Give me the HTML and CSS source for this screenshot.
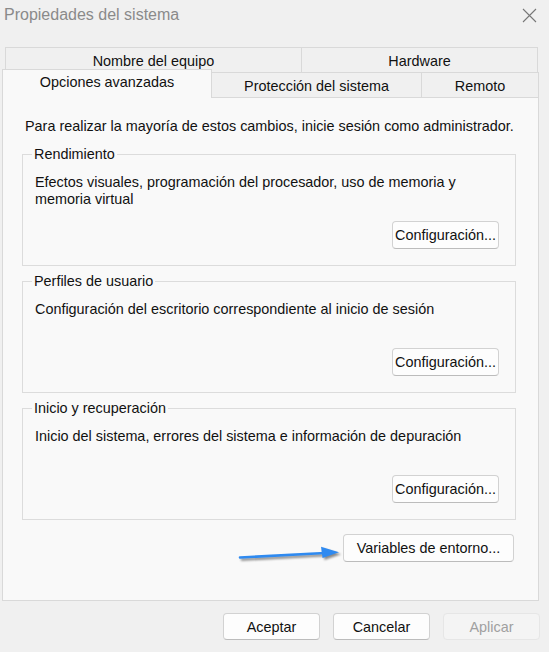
FILE: index.html
```html
<!DOCTYPE html>
<html lang="es">
<head>
<meta charset="utf-8">
<title>Propiedades del sistema</title>
<link rel="stylesheet" href="styles.css">
</head>
<body>
<div class="window">
  <header class="titlebar">
    <span class="title">Propiedades del sistema</span>
    <svg class="close" width="15" height="15" viewBox="0 0 15 15" aria-label="Cerrar">
      <path d="M1 1L14 14M14 1L1 14" />
    </svg>
  </header>

  <div class="tabs">
    <div class="tabrow tabrow-top">
      <div class="tab tab-nombre">Nombre del equipo</div>
      <div class="tab tab-hardware">Hardware</div>
    </div>
    <div class="tabrow tabrow-bottom">
      <div class="tab tab-active tab-opciones">Opciones avanzadas</div>
      <div class="tab tab-proteccion">Protección del sistema</div>
      <div class="tab tab-remoto">Remoto</div>
    </div>
  </div>

  <div class="panel">
    <p class="intro">Para realizar la mayoría de estos cambios, inicie sesión como administrador.</p>

    <fieldset class="group">
      <legend>Rendimiento</legend>
      <div class="group-body">
        <p class="desc">Efectos visuales, programación del procesador, uso de memoria y memoria virtual</p>
        <button class="btn btn-cfg">Configuración...</button>
      </div>
    </fieldset>

    <fieldset class="group">
      <legend>Perfiles de usuario</legend>
      <div class="group-body">
        <p class="desc">Configuración del escritorio correspondiente al inicio de sesión</p>
        <button class="btn btn-cfg">Configuración...</button>
      </div>
    </fieldset>

    <fieldset class="group">
      <legend>Inicio y recuperación</legend>
      <div class="group-body">
        <p class="desc">Inicio del sistema, errores del sistema e información de depuración</p>
        <button class="btn btn-cfg">Configuración...</button>
      </div>
    </fieldset>

    <div class="env-row">
      <button class="btn btn-env">Variables de entorno...</button>
    </div>

    <svg class="arrow" width="110" height="22" viewBox="0 0 110 22" aria-hidden="true">
      <line x1="5" y1="14.5" x2="90" y2="10" />
      <polygon points="104,9.2 86,3.8 87.5,15" />
    </svg>
  </div>

  <footer class="footer">
    <button class="btn btn-foot">Aceptar</button>
    <button class="btn btn-foot">Cancelar</button>
    <button class="btn btn-foot btn-disabled">Aplicar</button>
  </footer>
</div>
</body>
</html>
```

FILE: styles.css
```css
* {
  box-sizing: border-box;
}

html, body {
  margin: 0;
  padding: 0;
}

body {
  width: 549px;
  height: 652px;
  overflow: hidden;
  background: #f0f0f0;
  font-family: "Liberation Sans", Arial, sans-serif;
  font-size: 14.4px;
  color: #111;
}

.window {
  width: 549px;
  height: 652px;
}

/* Title bar */
.titlebar {
  height: 30px;
  display: flex;
  align-items: center;
  justify-content: space-between;
  padding: 0 12px 0 4px;
}

.title {
  font-size: 16px;
  color: #8a8a8a;
}

.close {
  stroke: #777;
  stroke-width: 1.1;
  fill: none;
}

/* Tabs */
.tabs {
  margin-top: 17px;
}

.tabrow {
  display: flex;
  height: 25px;
}

.tabrow-top {
  margin-left: 5px;
}

.tabrow-bottom {
  margin-left: 2px;
  align-items: flex-end;
}

.tab {
  height: 25px;
  display: flex;
  align-items: center;
  justify-content: center;
  border: 1px solid #d9d9d9;
  border-bottom: none;
  background: #f0f0f0;
  white-space: nowrap;
  padding-top: 1px;
}

.tab + .tab {
  margin-left: -1px;
}

.tab-nombre { width: 297px; }
.tab-hardware { width: 237px; }

.tab-opciones { width: 210px; }
.tab-proteccion { width: 211px; }
.tab-remoto { width: 118px; }

.tab-active {
  position: relative;
  z-index: 1;
  height: 29px;
  margin-bottom: -1px;
  background: #f9f9f9;
  padding-top: 0;
  padding-bottom: 5px;
}

/* Panel */
.panel {
  position: relative;
  width: 537px;
  height: 504px;
  margin-left: 2px;
  background: #f9f9f9;
  border: 1px solid #d9d9d9;
  padding: 20px 22px 0 19px;
}

.intro {
  margin: 0 0 0 3px;
  line-height: 17px;
  white-space: nowrap;
}

.group {
  margin: 11px 0 0 0;
  padding: 0 16px 16px 12px;
  border: 1px solid #dcdcdc;
  min-width: 0;
}

.group + .group {
  margin-top: 7px;
}

.group legend {
  padding: 0 2px;
  margin-left: -3px;
  line-height: 17px;
}

.group-body {
  height: 75px;
  margin-top: 11px;
  display: flex;
  flex-direction: column;
  justify-content: space-between;
  align-items: flex-end;
}

.desc {
  align-self: stretch;
  margin: 0;
  line-height: 17px;
}

/* Buttons */
.btn {
  font-family: inherit;
  font-size: 14.4px;
  color: #111;
  background: #fdfdfd;
  border: 1px solid #d2d2d2;
  border-bottom-color: #bcbcbc;
  border-radius: 4px;
  padding: 0;
  display: flex;
  align-items: center;
  justify-content: center;
  white-space: nowrap;
}

.btn-cfg {
  width: 107px;
  height: 28px;
}

.env-row {
  display: flex;
  justify-content: flex-end;
  margin-top: 14px;
  padding-right: 2px;
}

.btn-env {
  width: 171px;
  height: 28px;
}

.arrow {
  position: absolute;
  left: 232px;
  top: 445px;
  overflow: visible;
  filter: drop-shadow(2px 2px 1.2px rgba(0, 0, 0, 0.45));
}

.arrow line {
  stroke: #2f8af0;
  stroke-width: 2.6;
  stroke-linecap: round;
}

.arrow polygon {
  fill: #2f8af0;
}

/* Footer */
.footer {
  display: flex;
  justify-content: flex-end;
  gap: 13px;
  margin-top: 12px;
  padding-right: 9px;
}

.btn-foot {
  width: 97px;
  height: 27px;
}

.btn-disabled {
  background: #f4f4f4;
  border-color: #e6e6e6;
  color: #a0a0a0;
}
```
